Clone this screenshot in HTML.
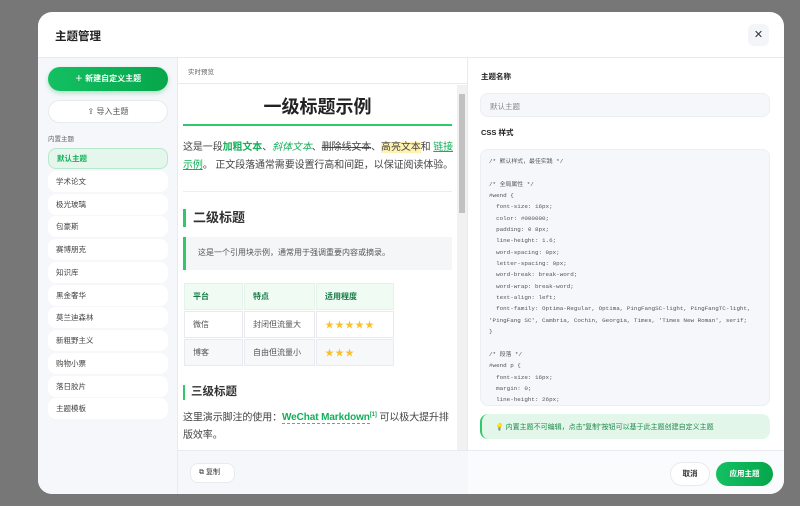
<!DOCTYPE html>
<html><head><meta charset="utf-8"><style>
*{box-sizing:border-box;margin:0;padding:0}
body{width:800px;height:506px;background:#777;font-family:"Liberation Sans","Noto Sans CJK SC",sans-serif;position:relative;overflow:hidden;color:#333}
.modal{position:absolute;left:38px;top:12px;width:746px;height:482px;background:#fff;border-radius:14px;overflow:hidden}
.hdr{height:46px;border-bottom:1px solid #e8eaef;position:relative}
.hdr h1{position:absolute;left:17px;top:16px;font-size:11.5px;font-weight:bold;color:#222}
.close{position:absolute;left:710px;top:12px;width:21px;height:22px;background:#f3f5f9;border-radius:6px;text-align:center;line-height:22px;font-size:11px;color:#334}
.side{position:absolute;left:0;top:46px;width:140px;height:436px;background:#f5f7fa;border-right:1px solid #e8eaef}
.btn1{position:absolute;left:10px;top:9px;width:120px;height:24px;border-radius:12px;background:linear-gradient(90deg,#13c062,#07a64b);color:#fff;font-size:8px;font-weight:bold;text-align:center;line-height:24px;box-shadow:0 2px 5px rgba(7,166,75,.3)}
.btn2{position:absolute;left:10px;top:42px;width:120px;height:23px;border-radius:12px;background:#fff;border:1px solid #e8eaef;color:#555;font-size:8px;text-align:center;line-height:21px}
.lbl{position:absolute;left:10px;top:75px;font-size:6.5px;color:#666}
.item{position:absolute;left:10px;width:120px;height:21px;border-radius:8px;background:#fff;font-size:7.5px;color:#444;padding-left:8px;line-height:21px}
.item.act{background:#e5f7ec;border:1px solid #b8e8cb;color:#12b058;font-weight:bold;line-height:19px}
.prev{position:absolute;left:140px;top:46px;width:290px;height:436px;border-right:1px solid #e8eaef}
.ph{height:26px;border-bottom:1px solid #e8eaef;font-size:6.5px;color:#666;padding:8px 0 0 10px}
.pc{position:absolute;left:0;top:27px;width:279px;height:366px;overflow:hidden;padding:0 5px}
.sb{position:absolute;left:279px;top:27px;width:10px;height:366px;background:#f1f1f1}
.sb div{position:absolute;left:2px;top:9px;width:6px;height:119px;background:#c1c1c1}
.pf{position:absolute;left:0;top:392px;width:290px;height:44px;background:#f5f7fa;border-top:1px solid #e8eaef}
.copy{position:absolute;left:12px;top:12px;width:45px;height:20px;border-radius:8px;background:#fff;border:1px solid #e8eaef;font-size:7px;line-height:18px;padding-left:8px;color:#333}
.h1{text-align:center;font-size:18px;font-weight:bold;color:#222;margin-top:8px;height:33px;border-bottom:2px solid #2fc96b;width:269px}
.p{font-size:10px;line-height:17.5px;color:#444;margin-top:13px;width:272px;letter-spacing:-0.1px}
.g{color:#12b058;font-weight:bold}
.hr{width:269px;height:1px;background:#eee;margin-top:17px}
.h2{margin-top:17px;font-size:13px;font-weight:bold;color:#333;border-left:3px solid #2fc96b;padding-left:7px;height:18px;line-height:18px}
.bq{margin-top:10px;width:269px;height:33px;background:#f5f6f8;border-left:3px solid #2fc96b;font-size:8px;color:#555;padding:10px 0 0 12px}
table{margin-top:12px;border-collapse:separate;border-spacing:1px;font-size:8px;color:#555}
td{height:27px;border:1px solid #e8eaef;padding-left:8px}
th{height:27px;border:1px solid #e4f3ea;background:#effbf3;color:#167a45;text-align:left;padding-left:8px;font-size:8px}
.st{color:#f6c02e;font-size:9px;letter-spacing:1px}
.h3{margin-top:18px;font-size:11.5px;font-weight:bold;color:#333;border-left:2px solid #2fc96b;padding-left:6px;height:15px;line-height:15px}
.right{position:absolute;left:430px;top:46px;width:316px;height:436px}
.rl{position:absolute;left:13px;font-size:7.5px;font-weight:bold;color:#222}
.inp{position:absolute;left:12px;top:35px;width:290px;height:24px;border:1px solid #eceef2;background:#f5f7fa;border-radius:8px;font-size:7.5px;color:#888;padding:7px 0 0 9px}
.code{position:absolute;left:12px;top:91px;width:290px;height:257px;border:1px solid #eceef2;background:#f5f7fa;border-radius:8px;padding:6px 0 0 8px;font-family:"Liberation Mono","Noto Sans CJK SC",monospace;font-size:5.9px;line-height:11.35px;color:#555;white-space:pre;overflow:hidden}
.tip{position:absolute;left:12px;top:356px;width:290px;height:25px;border-radius:8px;background:#e3f6ea;border-left:2px solid #2fc96b;font-size:7px;color:#1c8a4c;padding:8px 0 0 13px}
.rf{position:absolute;left:0;top:392px;width:316px;height:44px;border-top:1px solid #e8eaef;background:#fafbfc}
.cancel{position:absolute;left:202px;top:11px;width:40px;height:24px;border-radius:12px;background:#fff;border:1px solid #e8eaef;font-size:7.5px;text-align:center;line-height:22px;font-weight:bold;color:#333}
.apply{position:absolute;left:248px;top:11px;width:57px;height:24px;border-radius:12px;background:linear-gradient(90deg,#13c062,#07a64b);color:#fff;font-size:7.5px;text-align:center;line-height:24px;font-weight:bold}
</style></head><body>
<div class="modal">
<div class="hdr"><h1>主题管理</h1><div class="close">✕</div></div>
<div class="side">
<div class="btn1">＋ 新建自定义主题</div>
<div class="btn2">⇪ 导入主题</div>
<div class="lbl">内置主题</div>
<div class="item act" style="top:90px">默认主题</div>
<div class="item" style="top:113px">学术论文</div>
<div class="item" style="top:136px">极光玻璃</div>
<div class="item" style="top:158px">包豪斯</div>
<div class="item" style="top:181px">赛博朋克</div>
<div class="item" style="top:204px">知识库</div>
<div class="item" style="top:227px">黑金奢华</div>
<div class="item" style="top:249px">莫兰迪森林</div>
<div class="item" style="top:272px">新粗野主义</div>
<div class="item" style="top:295px">购物小票</div>
<div class="item" style="top:318px">落日胶片</div>
<div class="item" style="top:340px">主题模板</div>
</div>
<div class="prev">
<div class="ph">实时预览</div>
<div class="pc">
<div class="h1">一级标题示例</div>
<div class="p">这是一段<span class="g">加粗文本</span>、<i style="color:#12b058">斜体文本</i>、<s>删除线文本</s>、<span style="background:#fff1b0">高亮文本</span>和 <span style="color:#12b058;text-decoration:underline">链接示例</span>。 正文段落通常需要设置行高和间距，以保证阅读体验。</div>
<div class="hr"></div>
<div class="h2">二级标题</div>
<div class="bq">这是一个引用块示例，通常用于强调重要内容或摘录。</div>
<table><tr><th style="width:59px">平台</th><th style="width:71px">特点</th><th style="width:78px">适用程度</th></tr>
<tr><td>微信</td><td>封闭但流量大</td><td class="st">★★★★★</td></tr>
<tr><td style="background:#f7f8fa">博客</td><td style="background:#f7f8fa">自由但流量小</td><td class="st" style="background:#f7f8fa">★★★</td></tr></table>
<div class="h3">三级标题</div>
<div class="p" style="margin-top:7px;font-size:10px">这里演示脚注的使用：<span class="g" style="border-bottom:1px dashed #2fc96b">WeChat Markdown</span><sup class="g" style="font-size:6px">[1]</sup> 可以极大提升排版效率。</div>
</div>
<div class="sb"><div></div></div>
<div class="pf"><div class="copy">⧉ 复制</div></div>
</div>
<div class="right">
<div class="rl" style="top:13px">主题名称</div>
<div class="inp">默认主题</div>
<div class="rl" style="top:69px">CSS 样式</div>
<div class="code">/* 默认样式，最佳实践 */

/* 全局属性 */
#wend {
  font-size: 16px;
  color: #000000;
  padding: 0 8px;
  line-height: 1.6;
  word-spacing: 0px;
  letter-spacing: 0px;
  word-break: break-word;
  word-wrap: break-word;
  text-align: left;
  font-family: Optima-Regular, Optima, PingFangSC-light, PingFangTC-light,
'PingFang SC', Cambria, Cochin, Georgia, Times, 'Times New Roman', serif;
}

/* 段落 */
#wend p {
  font-size: 16px;
  margin: 0;
  line-height: 26px;</div>
<div class="tip">💡 内置主题不可编辑，点击"复制"按钮可以基于此主题创建自定义主题</div>
<div class="rf"><div class="cancel">取消</div><div class="apply">应用主题</div></div>
</div>
</div>
</body></html>
